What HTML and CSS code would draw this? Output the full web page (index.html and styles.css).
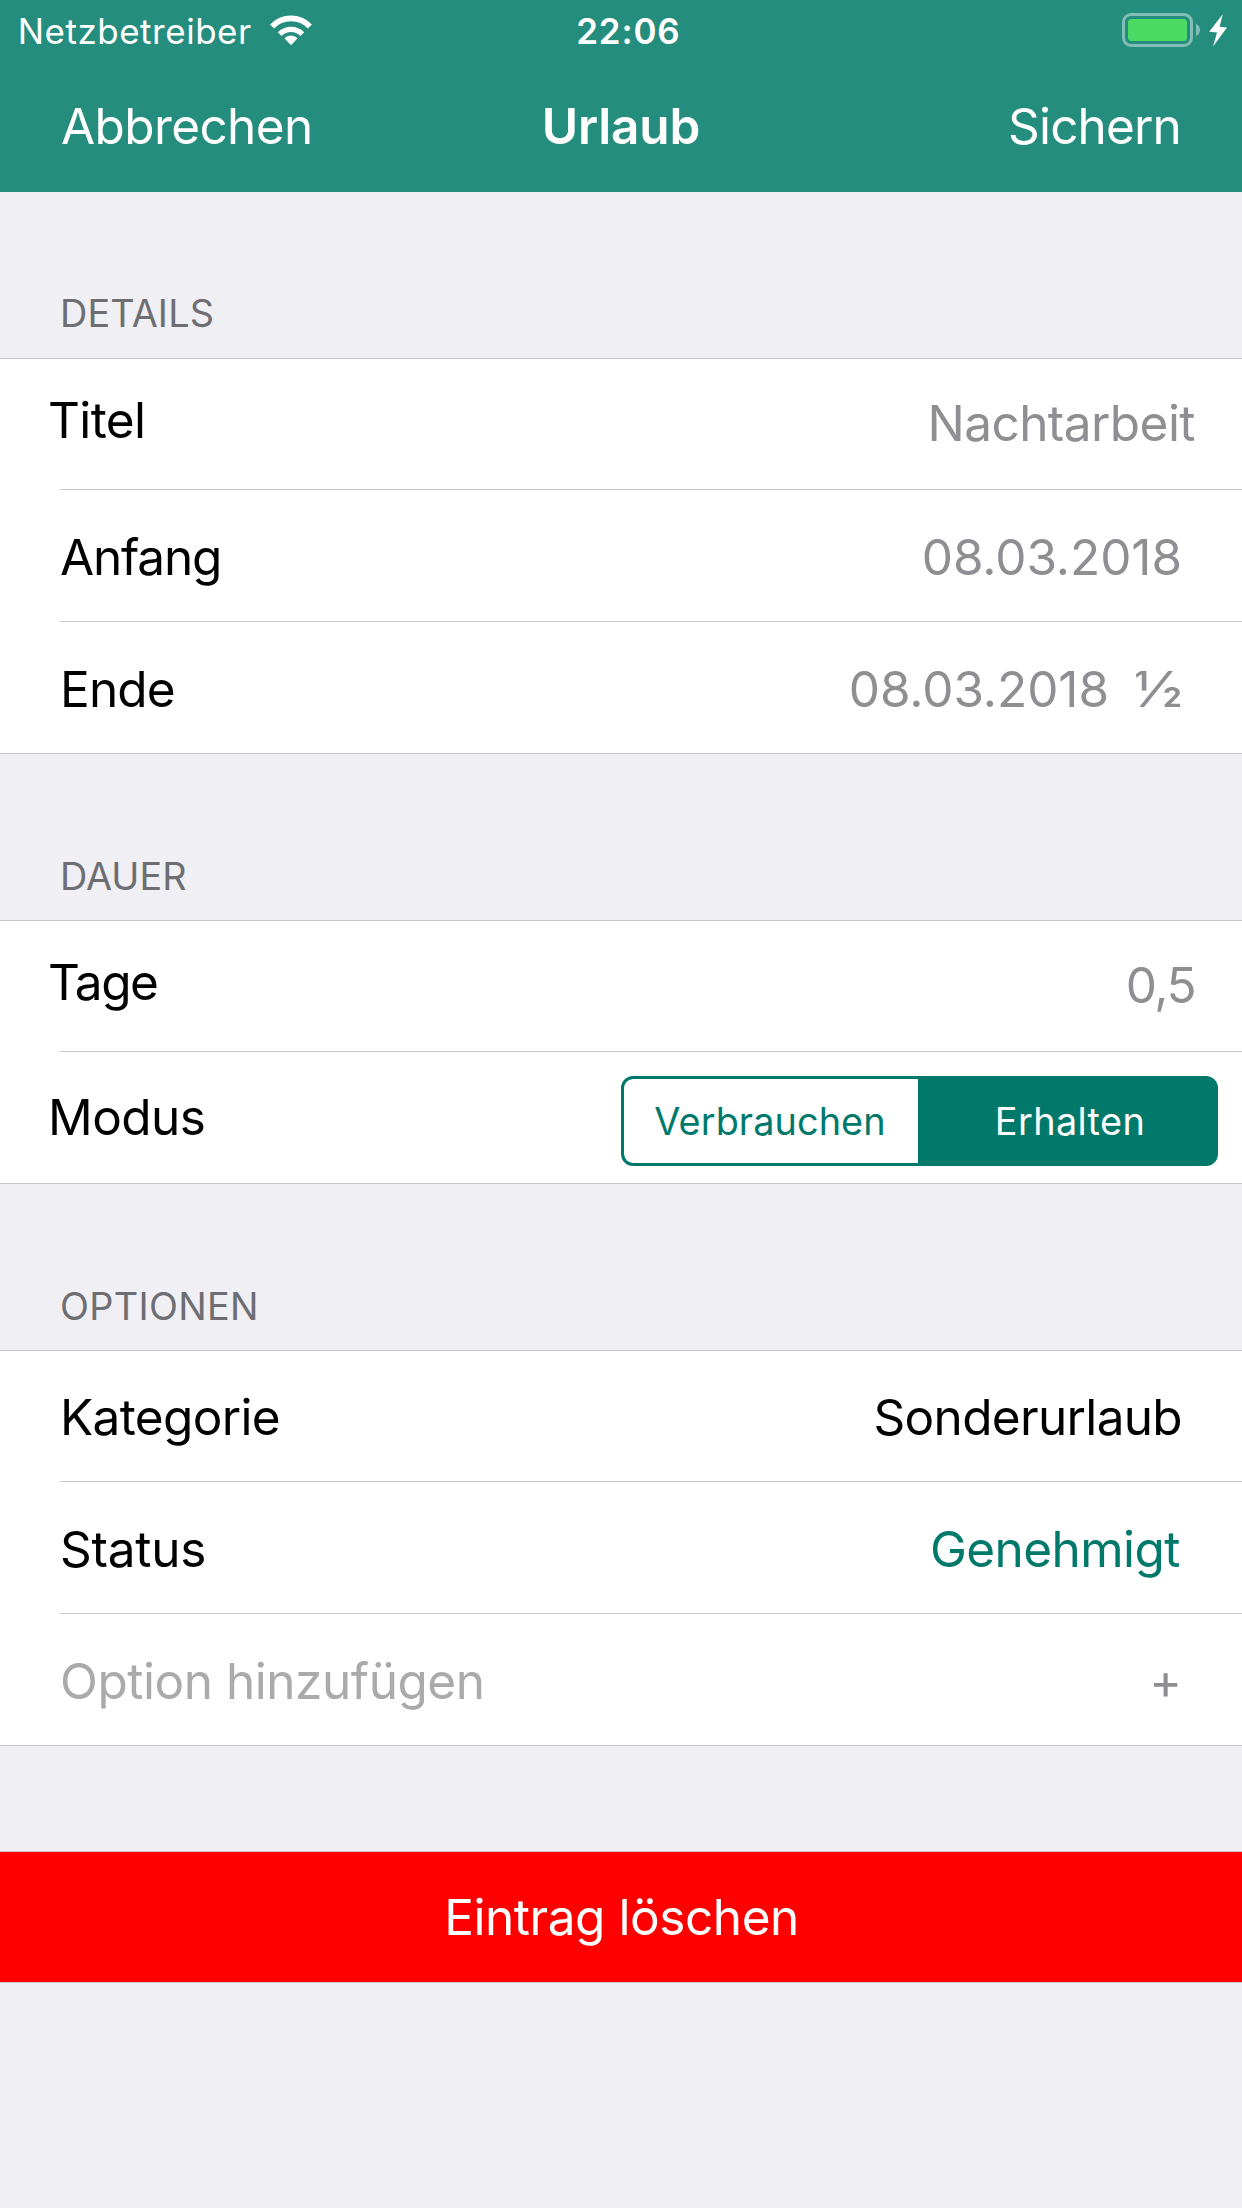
FILE: index.html
```
<!DOCTYPE html>
<html lang="de">
<head>
<meta charset="utf-8">
<title>Urlaub</title>
<link rel="stylesheet" href="styles.css">
</head>
<body>
<header class="header">
  <div class="status">
    <div class="status-left">
      <span class="carrier">Netzbetreiber</span>
      <svg class="wifi" viewBox="0 0 42 32" fill="none" stroke="#fff">
        <path d="M2.1 13.4A26.4 26.4 0 0 1 39.9 13.4" stroke-width="5.7"/>
        <path d="M9.7 21.1A15.9 15.9 0 0 1 32.3 21.1" stroke-width="5.4"/>
        <path d="M14.4 25.3A9 9 0 0 1 27.6 25.3L21.7 31.6Q21 32.2 20.3 31.6Z" fill="#fff" stroke="none"/>
      </svg>
    </div>
    <span class="time">22:06</span>
    <svg class="battery" viewBox="0 0 106 36">
      <rect x="1.5" y="1.5" width="68" height="31" rx="7.5" fill="none" stroke="#fff" stroke-opacity=".42" stroke-width="3"/>
      <rect x="6" y="6" width="59" height="22" rx="3.5" fill="#4cd964"/>
      <path d="M74 10.8Q78 12.8 78 17T74 23.2Z" fill="#fff" fill-opacity=".42"/>
      <path d="M100.7 1.3L87.2 18.8L95 19.4L91 33.4L105 14.4L97.6 13.8Z" fill="#fff"/>
    </svg>
  </div>
  <nav class="navbar">
    <a class="nav-cancel">Abbrechen</a>
    <h1 class="nav-title">Urlaub</h1>
    <a class="nav-save">Sichern</a>
  </nav>
</header>
<main>
  <section>
    <h2 class="section-title first track-details">DETAILS</h2>
    <div class="group">
      <div class="row input-row first-row">
        <span class="label track-titel">Titel</span><span class="value track-note">Nachtarbeit</span>
      </div>
      <div class="row">
        <span class="label track-anfang">Anfang</span><span class="value date">08.03.2018</span>
      </div>
      <div class="row">
        <span class="label track-ende">Ende</span><span class="value date">08.03.2018</span><span class="half"><span class="half-glyph">½</span></span>
      </div>
    </div>
  </section>
  <section>
    <h2 class="section-title">DAUER</h2>
    <div class="group">
      <div class="row input-row first-row">
        <span class="label track-tage">Tage</span><span class="value track-tage">0,5</span>
      </div>
      <div class="row mode-row">
        <span class="label track-note">Modus</span>
        <div class="segmented">
          <span class="segment">Verbrauchen</span><span class="segment selected">Erhalten</span>
        </div>
      </div>
    </div>
  </section>
  <section>
    <h2 class="section-title track-optionen">OPTIONEN</h2>
    <div class="group">
      <div class="row first-row category-row">
        <span class="label track-kategorie">Kategorie</span><span class="value dark track-kategorie">Sonderurlaub</span>
      </div>
      <div class="row">
        <span class="label track-status">Status</span><span class="value approved track-note">Genehmigt</span>
      </div>
      <div class="row">
        <span class="label placeholder">Option hinzufügen</span><span class="value">+</span>
      </div>
    </div>
  </section>
  <button class="delete">Eintrag löschen</button>
</main>
</body>
</html>
```
FILE: styles.css
```
* {
  box-sizing: border-box;
}

body {
  margin: 0;
  min-height: 2208px;
  background: #efeff4;
  color: #000;
  font: 400 49.5px/60px Inter, "Liberation Sans", sans-serif;
}

h1,
h2 {
  margin: 0;
}

/* Header */

.header {
  height: 192px;
  background: #258d7e;
  color: #fff;
}

.status {
  display: grid;
  grid-template-columns: 1fr auto 1fr;
  height: 96px;
  padding: 10px 15px 0 17.7px;
  font-size: 34.9px;
  line-height: 42px;
}

.status-left {
  display: flex;
  gap: 18px;
}

.carrier {
  letter-spacing: 0.57px;
}

.wifi {
  width: 42px;
  height: 32px;
  margin-top: 3.3px;
  overflow: visible;
}

.time {
  padding-left: 12px;
  font-weight: 600;
  letter-spacing: 0.85px;
}

.battery {
  justify-self: end;
  width: 106px;
  height: 36px;
  margin: 3px -1px 0 0;
}

.navbar {
  display: grid;
  grid-template-columns: 1fr auto 1fr;
  padding: 0 61px;
}

.nav-cancel {
  letter-spacing: -0.61px;
}

.nav-title {
  font-size: 49.5px;
  font-weight: 600;
  letter-spacing: -0.17px;
}

.nav-save {
  justify-self: end;
  letter-spacing: -0.84px;
}

/* Grouped table */

.section-title {
  padding: 99px 60px 21px;
  color: #6d6d72;
  font-size: 37.8px;
  font-weight: 400;
  line-height: 46px;
}

.section-title.first {
  padding: 98px 60px 22px;
}

.group {
  border-top: 1px solid #c8c7cc;
  border-bottom: 1px solid #c8c7cc;
  background: #fff;
}

.row {
  display: flex;
  height: 132px;
  padding: 37px 60px 0;
  background: linear-gradient(#c8c7cc, #c8c7cc) 60px 100% / 100% 1px no-repeat;
}

.first-row {
  height: 131px;
}

.row:last-child {
  height: 131px;
  background: none;
}

.category-row {
  padding-top: 36px;
}

.input-row {
  padding: 31px 47px 0 48px;
}

.input-row .value {
  padding-top: 3px;
}

.value {
  margin-left: auto;
  color: #8e8e93;
}

.date {
  letter-spacing: -0.06px;
}

.half {
  width: 48px;
  margin-left: 25px;
  color: #8e8e93;
}

.half-glyph {
  display: inline-block;
  transform: scaleX(1.165);
  transform-origin: left;
}

.dark {
  color: #000;
}

.approved {
  margin-right: 2px;
  color: #00796b;
}

.placeholder {
  color: #aaa;
  letter-spacing: -0.46px;
}

/* Segmented control */

.mode-row {
  padding: 24px 24px 0 48px;
}

.mode-row .label {
  padding-top: 11px;
}

.segmented {
  display: flex;
  width: 597px;
  height: 90px;
  margin-left: auto;
  overflow: hidden;
  border: 3px solid #00796b;
  border-radius: 12px;
  background: #00796b;
  color: #00796b;
  font-size: 37.8px;
  line-height: 46px;
  text-align: center;
}

.segment {
  width: 294px;
  padding: 19px 2px 0 0;
  border-radius: 8px 0 0 8px;
  background: #fff;
  letter-spacing: 0.1px;
}

.segment.selected {
  width: 297px;
  padding: 19px 0 0 7px;
  border-radius: 0;
  background: #00796b;
  color: #fff;
  letter-spacing: 0.39px;
}

/* Delete button */

.delete {
  display: block;
  width: 100%;
  height: 132px;
  margin-top: 105px;
  padding: 0 0 0 1px;
  border: 0 solid #c8c7cc;
  border-width: 1px 0;
  background: #f00;
  color: #fff;
  font: inherit;
  letter-spacing: -0.44px;
}

/* Per-word tracking */

.track-details { letter-spacing: 0.15px; }
.track-optionen { letter-spacing: 0.33px; }
.track-titel { letter-spacing: -0.63px; }
.track-note { letter-spacing: -0.55px; }
.track-anfang { letter-spacing: -1.2px; }
.track-ende { letter-spacing: -0.87px; }
.track-tage { letter-spacing: -1.48px; }
.track-kategorie { letter-spacing: -0.67px; }
.track-status { letter-spacing: -0.23px; }
```
